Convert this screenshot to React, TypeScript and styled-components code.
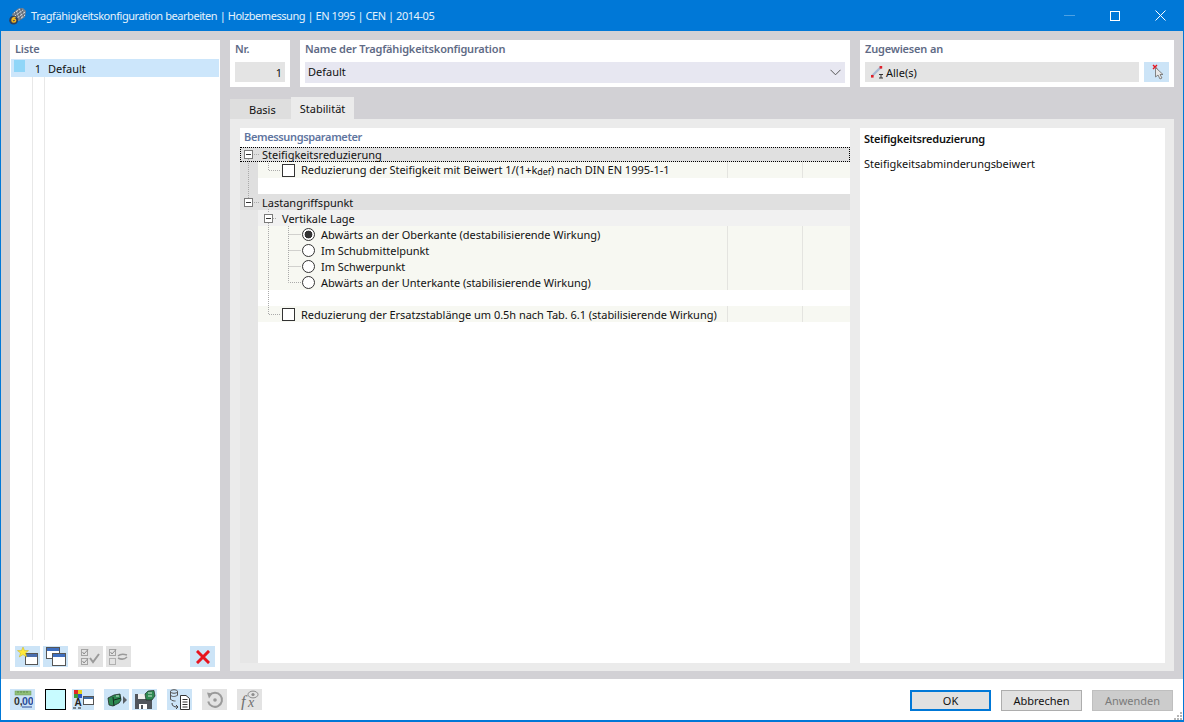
import React from 'react';
import styled, { createGlobalStyle } from 'styled-components';

const GlobalStyle = createGlobalStyle`
  html, body {
    margin: 0;
    padding: 0;
    background: #fff;
  }
  * {
    box-sizing: border-box;
  }
`

const IconMain = () => (
  <svg width="18" height="18" viewBox="0 0 18 18">
    <path d="M3 7 L9 1.5 L14 1 L17 4 L16 10 L10 14 L5 13 Z" fill="#79828e" />
    <path d="M5 6 L11 2 M6 9 L14 3 M8 11 L16 5 M11 12 L16 8" stroke="#dfe4ea" strokeWidth="1" />
    <path d="M6 4 L9 13 M9 2.5 L12 13 M12 1.5 L15 10" stroke="#4b5560" strokeWidth="0.7" />
    <circle cx="4.6" cy="13.2" r="4.4" fill="#2d3f5e" />
    <path d="M6.6 10.6 C4.4 10 3 11.5 3 13.4 C3 15.4 6.4 15.7 6.6 13.6 C6.7 12 4.6 12 3.4 13" stroke="#f4b81c" strokeWidth="1.5" fill="none" />
  </svg>
)

const IconMember = () => (
  <svg width="14" height="14" viewBox="0 0 14 14">
    <path d="M2 11 L11 2" stroke="#a9bad2" strokeWidth="2.4" />
    <rect x="1" y="10" width="2.6" height="2.6" fill="#e0202a" />
    <rect x="9.6" y="1" width="2.6" height="2.6" fill="#e0202a" />
    <path d="M9 9.5h4M11 9.5v3.5M9 13h4" stroke="#333" fill="none" />
  </svg>
)

const IconPick = () => (
  <svg width="18" height="18" viewBox="0 0 18 18">
    <path d="M5 2 L9 6 M9 2 L5 6" stroke="#e8141e" strokeWidth="1.4" />
    <path d="M7.5 4.5 L7.5 14 L10 12 L12 16 L14 15 L12 11.5 L15 11.5 Z" fill="#e8e8e8" stroke="#777" strokeWidth="0.9" />
  </svg>
)

const IconNew = () => (
  <svg width="22" height="19" viewBox="0 0 22 19">
    <rect x="8.5" y="6.5" width="12" height="11" fill="#fff" stroke="#555" />
    <rect x="9" y="7" width="11" height="3" fill="#4a6fb0" />
    <path d="M6 0 L7.5 3.6 L11.5 3.6 L8.5 6 L9.7 10 L6 7.6 L2.3 10 L3.5 6 L.5 3.6 L4.5 3.6 Z" fill="#ffe93a" stroke="#c9b31a" strokeWidth="0.5" />
  </svg>
)

const IconCopy = () => (
  <svg width="20" height="19" viewBox="0 0 20 19">
    <rect x="0.5" y="0.5" width="13" height="11" fill="#fff" stroke="#555" />
    <rect x="1" y="1" width="12" height="3" fill="#3f6fc0" />
    <rect x="6.5" y="6.5" width="13" height="12" fill="#fff" stroke="#555" />
    <rect x="7" y="7" width="12" height="3" fill="#3f6fc0" />
  </svg>
)

const IconCheckAll = () => (
  <svg width="20" height="18" viewBox="0 0 20 18" fill="none">
    <rect x="0.5" y="1.5" width="6" height="6" stroke="#a4a4a4" />
    <rect x="0.5" y="10.5" width="6" height="6" stroke="#a4a4a4" />
    <path d="M1.5 4 L3 6 L7 1.5 M1.5 13 L3 15 L7 10.5" stroke="#8e8e8e" />
    <path d="M9 10 L12 14 L18 6" stroke="#9a9a9a" strokeWidth="2" />
  </svg>
)

const IconCheckSwap = () => (
  <svg width="20" height="18" viewBox="0 0 20 18" fill="none">
    <rect x="0.5" y="1.5" width="6" height="6" stroke="#a4a4a4" />
    <rect x="0.5" y="10.5" width="6" height="6" stroke="#b0b0b0" />
    <path d="M1.5 4 L3 6 L7 1.5" stroke="#8e8e8e" />
    <path d="M9 8 C11 6 15 6 18 7 M18 9 C15 12 11 11 9 10" stroke="#9a9a9a" strokeWidth="1.5" />
  </svg>
)

const IconDelete = () => (
  <svg width="14" height="14" viewBox="0 0 14 14">
    <path d="M2 2 L12 12 M12 2 L2 12" stroke="#e8141e" strokeWidth="3" strokeLinecap="square" />
  </svg>
)

const IconNumbers = () => (
  <svg width="20" height="19" viewBox="0 0 20 19">
    <rect x="2" y="1" width="16" height="4" fill="#8fbf78" stroke="#6d9a58" strokeWidth="0.5" />
    <path d="M5 1v2M8 1v2M11 1v2M14 1v2" stroke="#4f7a40" strokeWidth="0.7" />
    <text x="1" y="15" fontSize="10.5" fontWeight="700" fill="#333" fontFamily="Liberation Sans, sans-serif">0,</text>
    <text x="9" y="15" fontSize="10.5" fontWeight="700" fill="#2b4d9a" fontFamily="Liberation Sans, sans-serif">00</text>
    <path d="M9 17h10" stroke="#2b4d9a" />
  </svg>
)

const IconStyles = () => (
  <svg width="22" height="19" viewBox="0 0 22 19">
    <rect x="2" y="0" width="4" height="4" fill="#e02828" />
    <rect x="6" y="0" width="4" height="4" fill="#e5d21c" />
    <rect x="2" y="4" width="4" height="4" fill="#3b9a3a" />
    <rect x="6" y="4" width="4" height="4" fill="#2b55c4" />
    <text x="2.5" y="16" fontSize="10" fontWeight="700" fill="#222" fontFamily="Liberation Sans, sans-serif">A</text>
    <path d="M1 18h3M6 18h3" stroke="#222" />
    <rect x="11.5" y="6.5" width="10" height="8" fill="#fff" stroke="#555" />
    <rect x="12" y="7" width="9" height="2" fill="#3f6fa8" />
  </svg>
)

const IconExport = () => (
  <svg width="20" height="16" viewBox="0 0 20 16">
    <path d="M1 6 L7 3 L13 2 L14 8 L12 11 L6 14 L2 13 Z" fill="#2e8a52" stroke="#1e2a24" strokeWidth="0.8" />
    <path d="M6 5 L7 14 M7 8 L14 6" stroke="#12291c" />
    <path d="M9 4h3" stroke="#cfe6d6" />
    <path d="M16 4 L20 8 L16 12 Z" fill="#5a5f66" />
  </svg>
)

const IconSaveModel = () => (
  <svg width="22" height="20" viewBox="0 0 22 20">
    <path d="M1 4 H15 L18 7 V19 H1 Z" fill="#50555c" />
    <rect x="4" y="4" width="8" height="5" fill="#f0f0f0" />
    <rect x="5" y="14" width="8" height="5" fill="#fff" />
    <rect x="7" y="15" width="2" height="4" fill="#50555c" />
    <path d="M11 4 L14 1 L20 0.5 L21 6 L18 10 L12 10 Z" fill="#2e8a52" stroke="#1e2a24" strokeWidth="0.7" />
    <path d="M14 3h4M14 6h4" stroke="#cfe6d6" />
  </svg>
)

const IconTable = () => (
  <svg width="22" height="21" viewBox="0 0 22 21" fill="none">
    <ellipse cx="5" cy="2.5" rx="3.5" ry="1.8" stroke="#555" />
    <path d="M1.5 2.5v8M8.5 2.5v4M1.5 6c1 2 5 2 7 0M1.5 10c1 2 4 2 5 2" stroke="#555" />
    <path d="M3 14 C3 17 5 18 8 18" stroke="#444" />
    <path d="M7 16 L9 18 L7 20" stroke="#444" />
    <path d="M11.5 6.5 H17 L20.5 9.5 V20.5 H11.5 Z" fill="#fff" stroke="#333" />
    <path d="M13.5 10.5h5M13.5 13h5M13.5 15.5h5M13.5 18h5" stroke="#333" />
  </svg>
)

const IconRestore = () => (
  <svg width="20" height="20" viewBox="0 0 20 20" fill="none">
    <path d="M4.5 5.5 A7 7 0 1 1 3.2 11.5" stroke="#9a9a9a" strokeWidth="2" />
    <path d="M2 2.5 L7.5 3.5 L4 8.5 Z" fill="#9a9a9a" />
    <circle cx="10" cy="10" r="1.8" fill="#9a9a9a" />
  </svg>
)

const IconFormula = () => (
  <svg width="24" height="20" viewBox="0 0 24 20" fill="none">
    <text x="3" y="17" fontSize="16" fontStyle="italic" fill="#6f6f6f" fontFamily="Liberation Serif, serif">f</text>
    <text x="10" y="17" fontSize="14" fontStyle="italic" fill="#6f6f6f" fontFamily="Liberation Serif, serif">x</text>
    <ellipse cx="15" cy="4.5" rx="5" ry="3.4" stroke="#8c8c8c" />
    <circle cx="15" cy="4.5" r="1.6" fill="#8c8c8c" />
  </svg>
)

function App() {
  return (
    <Window>
      <GlobalStyle />
      <TitleBar>
        <IconMain />
        <TitleText>Tragfähigkeitskonfiguration bearbeiten | Holzbemessung | EN 1995 | CEN | 2014-05</TitleText>
        <WindowButtons>
          <svg width="11" height="1" viewBox="0 0 11 1"><path d="M0 .5h11" stroke="#4da1e3" /></svg>
          <svg width="10" height="10" viewBox="0 0 10 10" fill="none"><rect x=".5" y=".5" width="9" height="9" stroke="#fff" /></svg>
          <svg width="11" height="11" viewBox="0 0 11 11" fill="none"><path d="M.5 .5l10 10M10.5 .5l-10 10" stroke="#fff" /></svg>
        </WindowButtons>
      </TitleBar>

      <Content>
        <ListPanel>
          <PanelLabel>Liste</PanelLabel>
          <ListRow>
            <Swatch />
            <ListNo>1</ListNo>
            <span>Default</span>
          </ListRow>
          <ListLines />
          <ListTools>
            <ToolButton><IconNew /></ToolButton>
            <ToolButton><IconCopy /></ToolButton>
            <ToolButton $disabled $gapLeft={7}><IconCheckAll /></ToolButton>
            <ToolButton $disabled><IconCheckSwap /></ToolButton>
            <ToolButton $pushRight><IconDelete /></ToolButton>
          </ListTools>
        </ListPanel>

        <Main>
          <TopRow>
            <NrBox>
              <PanelLabel>Nr.</PanelLabel>
              <ReadOnlyField $right>1</ReadOnlyField>
            </NrBox>
            <NameBox>
              <PanelLabel>Name der Tragfähigkeitskonfiguration</PanelLabel>
              <SelectField>
                <SelectValue>Default</SelectValue>
                <svg width="11" height="7" viewBox="0 0 11 7" fill="none"><path d="M.5 .8L5.5 5.8L10.5 .8" stroke="#555" /></svg>
              </SelectField>
            </NameBox>
            <AssignBox>
              <PanelLabel>Zugewiesen an</PanelLabel>
              <AssignRow>
                <ReadOnlyField><IconMember />Alle(s)</ReadOnlyField>
                <PickButton><IconPick /></PickButton>
              </AssignRow>
            </AssignBox>
          </TopRow>

          <Tabs>
            <Tab>Basis</Tab>
            <Tab $active>Stabilität</Tab>
          </Tabs>

          <TabPanel>
            <ParamsPanel>
              <ParamsLabel>Bemessungsparameter</ParamsLabel>
              <Tree>
                <TreeLines width="70" height="180" viewBox="0 0 70 180" fill="none">
                  <path d="M8.5 12V52M14 7.5h6M14 55.5h6" stroke="#aaa" strokeDasharray="1 1" />
                  <path d="M28.5 16V23.5H41" stroke="#aaa" strokeDasharray="1 1" />
                  <path d="M28.5 62V66M28.5 76V167.5H41" stroke="#aaa" strokeDasharray="1 1" />
                  <path d="M33 71.5h4" stroke="#aaa" strokeDasharray="1 1" />
                  <path d="M48.5 79V135.5H61M48.5 87.5H61M48.5 103.5H61M48.5 119.5H61" stroke="#aaa" strokeDasharray="1 1" />
                </TreeLines>

                <GroupRow $focused>
                  <Toggle />
                  <span>Steifigkeitsreduzierung</span>
                </GroupRow>
                <ItemRow>
                  <ItemLabel $indent={24}>
                    <CheckBox />
                    <span>Reduzierung der Steifigkeit mit Beiwert 1/(1+k<Sub>def</Sub>) nach DIN EN 1995-1-1</span>
                  </ItemLabel>
                  <Cell />
                  <Cell />
                </ItemRow>
                <BlankRow />
                <GroupRow>
                  <Toggle />
                  <span>Lastangriffspunkt</span>
                </GroupRow>
                <SubGroupRow>
                  <Toggle />
                  <span>Vertikale Lage</span>
                </SubGroupRow>
                <ItemRow>
                  <ItemLabel $indent={44}>
                    <Radio $checked />
                    <span>Abwärts an der Oberkante (destabilisierende Wirkung)</span>
                  </ItemLabel>
                  <Cell />
                  <Cell />
                </ItemRow>
                <ItemRow>
                  <ItemLabel $indent={44}>
                    <Radio />
                    <span>Im Schubmittelpunkt</span>
                  </ItemLabel>
                  <Cell />
                  <Cell />
                </ItemRow>
                <ItemRow>
                  <ItemLabel $indent={44}>
                    <Radio />
                    <span>Im Schwerpunkt</span>
                  </ItemLabel>
                  <Cell />
                  <Cell />
                </ItemRow>
                <ItemRow>
                  <ItemLabel $indent={44}>
                    <Radio />
                    <span>Abwärts an der Unterkante (stabilisierende Wirkung)</span>
                  </ItemLabel>
                  <Cell />
                  <Cell />
                </ItemRow>
                <BlankRow />
                <ItemRow>
                  <ItemLabel $indent={24}>
                    <CheckBox />
                    <span>Reduzierung der Ersatzstablänge um 0.5h nach Tab. 6.1 (stabilisierende Wirkung)</span>
                  </ItemLabel>
                  <Cell />
                  <Cell />
                </ItemRow>
              </Tree>
            </ParamsPanel>
            <InfoPanel>
              <InfoTitle>Steifigkeitsreduzierung</InfoTitle>
              <InfoText>Steifigkeitsabminderungsbeiwert</InfoText>
            </InfoPanel>
          </TabPanel>
        </Main>
      </Content>

      <Footer>
        <ToolButton><IconNumbers /></ToolButton>
        <ColorBox />
        <ToolButton $narrow $gapLeft={3}><IconStyles /></ToolButton>
        <ToolButton $gapLeft={7}><IconExport /></ToolButton>
        <ToolButton><IconSaveModel /></ToolButton>
        <ToolButton $gapLeft={7}><IconTable /></ToolButton>
        <ToolButton $disabled $gapLeft={7}><IconRestore /></ToolButton>
        <ToolButton $disabled $gapLeft={7}><IconFormula /></ToolButton>
        <DialogButtons>
          <DialogButton $primary>OK</DialogButton>
          <DialogButton>Abbrechen</DialogButton>
          <DialogButton $disabled>Anwenden</DialogButton>
        </DialogButtons>
        <Grip width="10" height="10" viewBox="0 0 10 10">
          <path d="M7 1h2v2H7zM4 4h2v2H4zM7 4h2v2H7zM1 7h2v2H1zM4 7h2v2H4zM7 7h2v2H7z" fill="#b5b5b5" />
        </Grip>
      </Footer>
    </Window>
  );
}

const Window = styled.div`
  position: relative;
  width: 1184px;
  height: 722px;
  display: flex;
  flex-direction: column;
  border: 1px solid #0078d7;
  border-top: 0;
  background: #fff;
  font-family: "Noto Sans", "Open Sans", sans-serif;
  font-size: 11px;
  color: #111;
  overflow: hidden;
`

const SelectValue = styled.span`
  margin-top: -2px;
`

const TitleBar = styled.div`
  height: 31px;
  flex: none;
  display: flex;
  align-items: center;
  gap: 4px;
  padding-left: 8px;
  background: #0078d7;
`

const TitleText = styled.div`
  font-size: 11px;
  letter-spacing: -0.44px;
  margin-top: -1px;
  color: #e6f2fb;
`

const WindowButtons = styled.div`
  margin-left: auto;
  display: flex;
  align-items: center;
  gap: 35px;
  padding-right: 17px;
`

const Content = styled.div`
  flex: 1;
  min-height: 0;
  display: flex;
  gap: 10px;
  padding: 9px 9px 8px;
  background: #d2d1d5;
`

const Box = styled.div`
  background: #fff;
  padding: 1px 5px 0;
`

const PanelLabel = styled.div`
  height: 15px;
  line-height: 15px;
  font-weight: 600;
  letter-spacing: -0.18px;
  color: #5f6b86;
  margin-bottom: 6px;
`

const ListPanel = styled(Box)`
  width: 210px;
  flex: none;
  display: flex;
  flex-direction: column;
  padding: 1px 1px 4px;

  ${PanelLabel} {
    margin: 0 0 3px 4px;
  }
`

const ListRow = styled.div`
  height: 18px;
  flex: none;
  display: flex;
  align-items: center;
  background: #cce6fb;
  padding-left: 3px;
`

const Swatch = styled.div`
  width: 11px;
  height: 12px;
  margin-top: -4px;
  background: #90d6f8;
`

const ListNo = styled.span`
  width: 13px;
  margin-left: 3px;
  margin-right: 7px;
  text-align: right;
`

const ListLines = styled.div`
  flex: 1;
  margin-bottom: 6px;
  background:
    linear-gradient(#e8e8e8, #e8e8e8) 21px 0 / 1px 100% no-repeat,
    linear-gradient(#e8e8e8, #e8e8e8) 33px 0 / 1px 100% no-repeat;
`

const ListTools = styled.div`
  display: flex;
  gap: 3px;
  padding: 0 4px;
`

const ToolButton = styled.div<{ $disabled?: boolean; $gapLeft?: number; $pushRight?: boolean; $narrow?: boolean }>`
  width: ${p => (p.$narrow ? 22 : 25)}px;
  height: 21px;
  flex: none;
  display: flex;
  align-items: center;
  justify-content: center;
  background: ${p => (p.$disabled ? '#e3e3e3' : '#cce4f7')};
  margin-left: ${p => (p.$pushRight ? 'auto' : `${p.$gapLeft ?? 0}px`)};
`

const Main = styled.div`
  flex: 1;
  min-width: 0;
  display: flex;
  flex-direction: column;
`

const TopRow = styled.div`
  height: 47px;
  flex: none;
  display: flex;
  gap: 10px;
  margin-bottom: 10px;
`

const NrBox = styled(Box)`
  width: 60px;
`

const NameBox = styled(Box)`
  width: 550px;
`

const AssignBox = styled(Box)`
  flex: 1;
`

const ReadOnlyField = styled.div<{ $right?: boolean }>`
  flex: 1;
  height: 20px;
  display: flex;
  align-items: center;
  justify-content: ${p => (p.$right ? 'flex-end' : 'flex-start')};
  gap: 2px;
  padding: 0 3px 0 5px;
  background: #e4e4e4;
`

const SelectField = styled.div`
  height: 21px;
  display: flex;
  align-items: center;
  justify-content: space-between;
  padding: 0 4px 0 3px;
  background: #e7e7f1;
`

const AssignRow = styled.div`
  display: flex;
  gap: 5px;
`

const PickButton = styled.div`
  width: 25px;
  height: 20px;
  display: flex;
  align-items: center;
  justify-content: center;
  background: #cce4f7;
`

const Tabs = styled.div`
  height: 22px;
  flex: none;
  display: flex;
`

const Tab = styled.div<{ $active?: boolean }>`
  height: ${p => (p.$active ? 22 : 20)}px;
  margin-top: ${p => (p.$active ? 0 : 2)}px;
  padding: ${p => (p.$active ? '0 9px' : '0 15px 0 19px')};
  display: flex;
  align-items: center;
  background: ${p => (p.$active ? '#ebebeb' : '#dedede')};
`

const TabPanel = styled.div`
  flex: 1;
  min-height: 0;
  display: flex;
  gap: 10px;
  padding: 9px 9px 8px 10px;
  background: #ebebeb;
`

const ParamsPanel = styled.div`
  width: 610px;
  flex: none;
  display: flex;
  flex-direction: column;
  background: #fff;
`

const ParamsLabel = styled(PanelLabel)`
  height: 19px;
  line-height: 17px;
  margin: 0;
  padding-left: 4px;
  letter-spacing: -0.36px;
  color: #5f75a0;
`

const Tree = styled.div`
  position: relative;
  flex: 1;
  background:
    linear-gradient(#dfdfdf, #dfdfdf) 0 15px / 18px 32px no-repeat,
    linear-gradient(#e6e6e6, #e6e6e6) 0 0 / 18px 100% no-repeat;
`

const TreeLines = styled.svg`
  position: absolute;
  left: 0;
  top: 0;
  z-index: 1;
`

const GroupRow = styled.div<{ $focused?: boolean }>`
  height: ${p => (p.$focused ? 15 : 16)}px;
  display: flex;
  align-items: center;
  padding-left: 4px;
  background: #e0e0e0;
  outline: ${p => (p.$focused ? '1px dotted #000' : 'none')};
  outline-offset: -1px;
`

const SubGroupRow = styled(GroupRow)`
  padding-left: 6px;
  margin-left: 18px;
  background: #f1f1f1;
`

const Toggle = styled.div`
  position: relative;
  width: 9px;
  height: 9px;
  margin-right: 9px;
  flex: none;
  border: 1px solid #7a7a7a;
  background: #fff;

  &::after {
    content: "";
    position: absolute;
    left: 1px;
    right: 1px;
    top: 3px;
    height: 1px;
    background: #333;
  }
`

const ItemRow = styled.div`
  height: 16px;
  margin-left: 18px;
  display: grid;
  grid-template-columns: 469px 75px 48px;
  background: #f7f8f2;
`

const ItemLabel = styled.div<{ $indent: number }>`
  display: flex;
  align-items: center;
  gap: 6px;
  padding-left: ${p => p.$indent}px;
  white-space: nowrap;
  letter-spacing: -0.03px;
`

const Cell = styled.div`
  border-left: 1px solid #e4e4e0;
`

const BlankRow = styled.div`
  height: 16px;
  margin-left: 18px;
  background: #fff;
`

const CheckBox = styled.div`
  width: 13px;
  height: 13px;
  flex: none;
  border: 1px solid #333;
  background: #fff;
`

const Radio = styled.div<{ $checked?: boolean }>`
  width: 13px;
  height: 13px;
  flex: none;
  border: 1px solid #333;
  border-radius: 50%;
  background: ${p => (p.$checked ? 'radial-gradient(circle, #333 0 3.6px, #fff 4.2px)' : '#fff')};
`

const Sub = styled.span`
  font-size: 9px;
  vertical-align: -1px;
`

const InfoPanel = styled.div`
  flex: 1;
  background: #fff;
  padding: 3px 4px;
`

const InfoTitle = styled.div`
  font-weight: 600;
  line-height: 15px;
  letter-spacing: -0.2px;
  margin-bottom: 10px;
`

const InfoText = styled.div`
  line-height: 15px;
  letter-spacing: -0.03px;
`

const Footer = styled.div`
  height: 42px;
  flex: none;
  display: flex;
  align-items: flex-start;
  gap: 3px;
  padding: 10px 10px 0 9px;
  background: #fff;
  border-bottom: 1px solid #0078d7;
`

const ColorBox = styled.div`
  width: 21px;
  height: 21px;
  margin-left: 7px;
  flex: none;
  border: 1px solid #000;
  background: #c8fbff;
`

const DialogButtons = styled.div`
  margin-left: auto;
  display: flex;
  gap: 10px;
  margin-top: 1px;
`

const DialogButton = styled.div<{ $primary?: boolean; $disabled?: boolean }>`
  width: 81px;
  height: 21px;
  display: flex;
  align-items: center;
  justify-content: center;
  background: ${p => (p.$disabled ? '#cccccc' : '#e1e1e1')};
  border: ${p => (p.$primary ? '2px solid #0078d7' : `1px solid ${p.$disabled ? '#bfbfbf' : '#adadad'}`)};
  color: ${p => (p.$disabled ? '#7a7a7a' : '#111')};
`

const Grip = styled.svg`
  position: absolute;
  right: 0;
  bottom: 0;
`

export default App;
